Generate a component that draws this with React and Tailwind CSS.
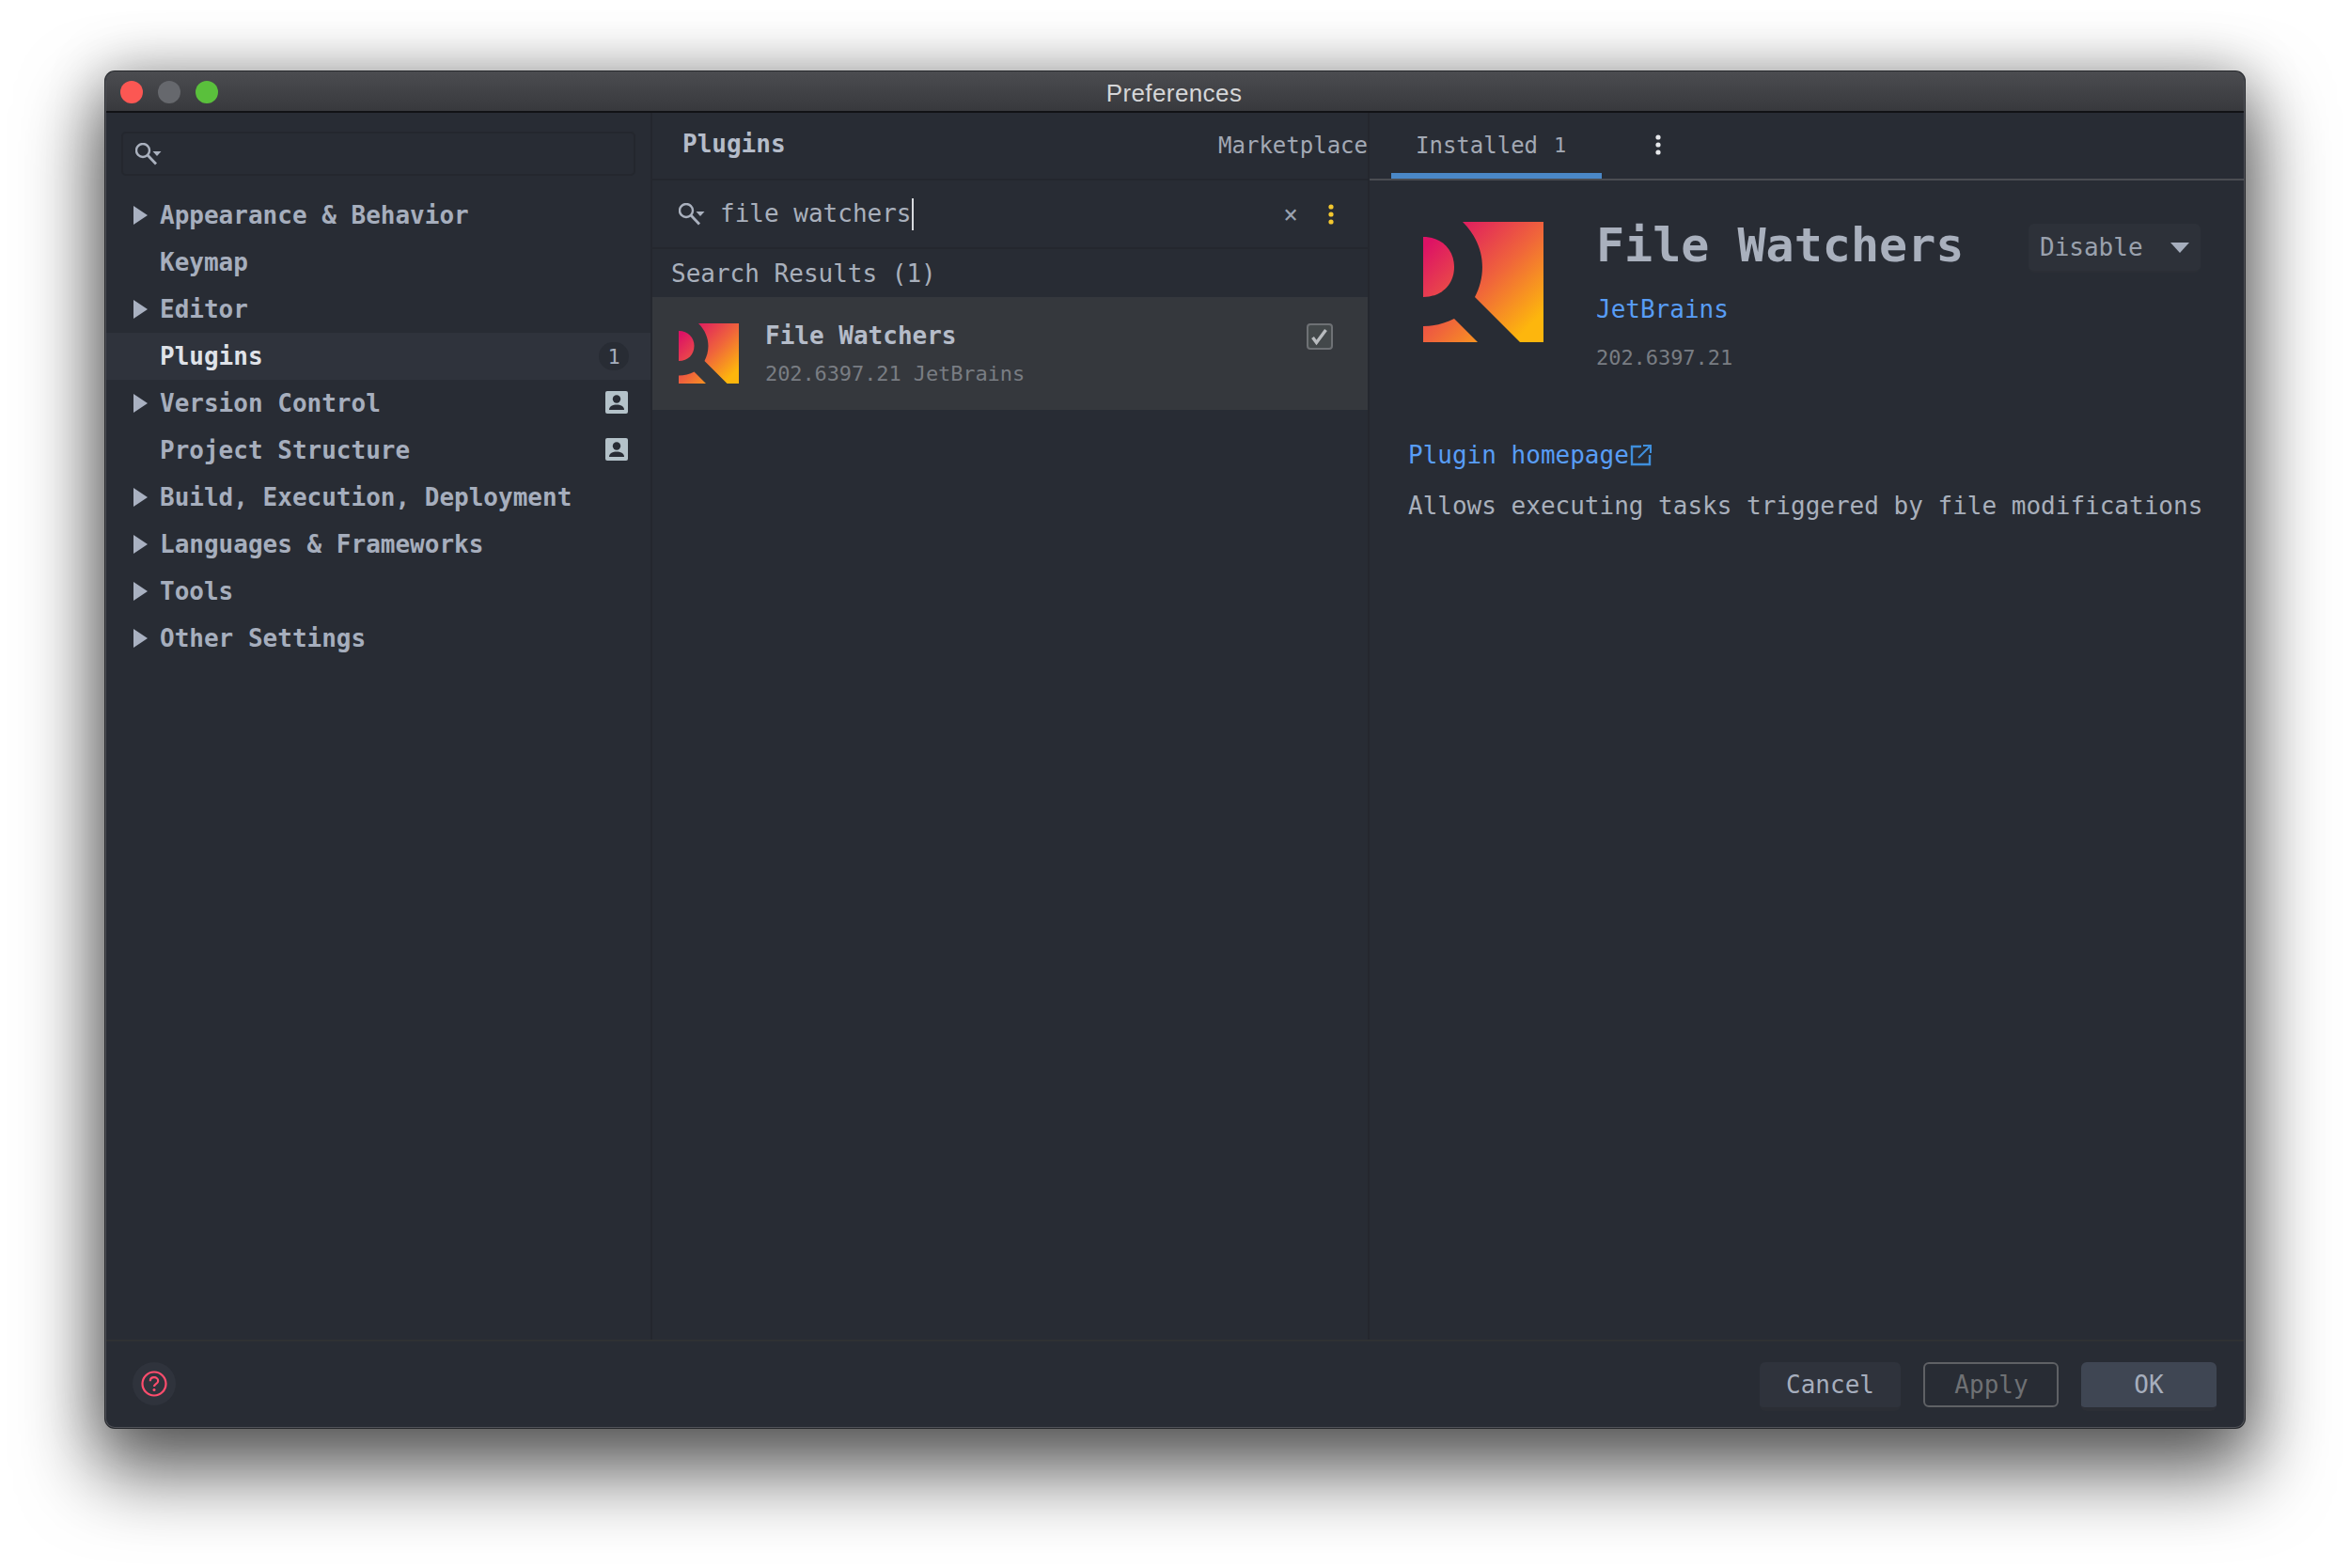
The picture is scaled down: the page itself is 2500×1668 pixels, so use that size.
const mono = "font-['DejaVu_Sans_Mono',monospace]";

const settings = [
  { label: "Appearance & Behavior", arrow: true },
  { label: "Keymap" },
  { label: "Editor", arrow: true },
  { label: "Plugins", active: true, badge: "1" },
  { label: "Version Control", arrow: true, person: true },
  { label: "Project Structure", person: true },
  { label: "Build, Execution, Deployment", arrow: true },
  { label: "Languages & Frameworks", arrow: true },
  { label: "Tools", arrow: true },
  { label: "Other Settings", arrow: true },
];

function SearchIcon() {
  return (
    <svg width="28" height="24" viewBox="0 0 28 24" fill="none" className="shrink-0">
      <circle cx="8" cy="8" r="7" stroke="#aab1be" strokeWidth="2.400" />
      <path d="M13 13l9 9.5" stroke="#aab1be" strokeWidth="2.800" />
      <path d="M18.5 9h9l-4.500 5z" fill="#aab1be" />
    </svg>
  );
}

function PersonIcon() {
  return (
    <svg width="24" height="24" viewBox="0 0 24 24">
      <rect width="24" height="24" rx="2" fill="#b4c2c9" />
      <circle cx="12" cy="8.500" r="4.200" fill="#282c34" />
      <path d="M4 20c0-4 4-5.500 8-5.500s8 1.500 8 5.500z" fill="#282c34" />
    </svg>
  );
}

function PluginLogo({ size, id }) {
  return (
    <svg width={size} height={size} viewBox="0 0 128 128" className="shrink-0">
      <defs>
        <linearGradient id={id} gradientUnits="userSpaceOnUse" x1="14" y1="14" x2="112" y2="112">
          <stop offset="0" stopColor="#dd1265" />
          <stop offset="0.55" stopColor="#f0663a" />
          <stop offset="1" stopColor="#fdb60d" />
        </linearGradient>
      </defs>
      <path d="M42 0H128V128H103L55 80C68 55 66 24 42 0Z" fill={`url(#${id})`} />
      <path d="M0 16C20 16 33 30 33 48C33 66 20 80 0 80Z" fill={`url(#${id})`} />
      <path d="M0 111C12 111 23 108 33 103L58 128H0Z" fill={`url(#${id})`} />
    </svg>
  );
}

function Dots({ color }) {
  return (
    <svg width="6" height="22" viewBox="0 0 6 22">
      <circle cx="3" cy="3" r="2.600" fill={color} />
      <circle cx="3" cy="11" r="2.600" fill={color} />
      <circle cx="3" cy="19" r="2.600" fill={color} />
    </svg>
  );
}

function Sidebar() {
  return (
    <aside className="w-[581px] shrink-0 border-r-2 border-[#24272e] flex flex-col">
      <div className="mt-[20px] ml-[16px] w-[547px] h-[47px] rounded-[5px] border-2 border-[#24272e] flex items-center pl-[13px]">
        <SearchIcon />
      </div>
      <div className="mt-[17px] flex flex-col">
        {settings.map((s) => (
          <div
            key={s.label}
            className={`h-[50px] flex items-center relative text-[26px] font-bold pl-[57px] pr-[20px] ${
              s.active ? "bg-[#2f333c] text-[#dfe2e8]" : "text-[#a6aebd]"
            }`}
          >
            {s.arrow && (
              <span className="absolute left-[29px] top-[15px] w-0 h-0 border-y-[10px] border-y-transparent border-l-[15px] border-l-[#a9b1c1]" />
            )}
            <span className="flex-1 leading-none">{s.label}</span>
            {s.badge && (
              <span className="w-[32px] h-[30px] mr-[3px] rounded-full bg-[#282c34] text-[#a6aebd] text-[22px] font-normal flex items-center justify-center">
                {s.badge}
              </span>
            )}
            {s.person && (
              <span className="mr-[4px] -mt-[2px] flex">
                <PersonIcon />
              </span>
            )}
          </div>
        ))}
      </div>
    </aside>
  );
}

function PluginList() {
  return (
    <section className="w-[763px] shrink-0 border-r-2 border-[#24272e] flex flex-col">
      <div className="h-[72px] border-b-2 border-[#24272e] flex items-center justify-between pl-[32px]">
        <span className="text-[26px] font-bold text-[#b5bcc9] -mt-[4px]">Plugins</span>
        <span className="text-[24px] text-[#a3a9b4]">Marketplace</span>
      </div>
      <div className="h-[73px] border-b-2 border-[#24272e] flex items-center pl-[28px]">
        <SearchIcon />
        <span className="ml-[16px] -mt-[1px] text-[26px] text-[#a9b0bc] leading-none">file watchers</span>
        <span className="w-[2px] h-[34px] bg-[#d8dade]" />
        <span className="ml-auto text-[#9aa2b0] text-[26px] leading-none">×</span>
        <span className="ml-[32px] mr-[36px] flex">
          <Dots color="#f4c82f" />
        </span>
      </div>
      <div className="h-[51px] flex items-center pl-[20px] pt-[1px] text-[26px] text-[#a9b0bc]">Search Results (1)</div>
      <div className="h-[120px] bg-[#35383d] flex pl-[28px] pr-[37px] pt-[28px]">
        <PluginLogo size={64} id="logo-small" />
        <div className="ml-[28px] flex-1">
          <div className="h-[26px] flex items-center text-[26px] font-bold text-[#b5bcc9]">File Watchers</div>
          <div className="mt-[15px] text-[22px] leading-[26px] tracking-[-0.1px] text-[#797d83]">202.6397.21 JetBrains</div>
        </div>
        <svg width="28" height="28" viewBox="0 0 28 28" fill="none" className="shrink-0">
          <rect x="1" y="1" width="26" height="26" rx="3" fill="#43484a" stroke="#6e7175" strokeWidth="2" />
          <path d="M6.500 15l4 5.500L20.500 7" stroke="#b8bbbe" strokeWidth="3.400" />
        </svg>
      </div>
    </section>
  );
}

function PluginDetails() {
  return (
    <section className="flex-1 flex flex-col min-w-0">
      <div className="h-[72px] border-b-2 border-[#4a4d52] flex items-stretch pl-[23px]">
        <div className="w-[224px] h-[70px] border-b-[6px] border-[#4a88c7] flex items-center pl-[26px] pt-[5px] text-[24px] text-[#a3a9b4]">
          Installed<span className="ml-[17px] text-[22px]">1</span>
        </div>
        <span className="ml-[57px] mt-[23px] flex self-start">
          <Dots color="#e6e8eb" />
        </span>
      </div>
      <div className="pl-[41px] flex flex-col">
        <div className="flex pl-[16px] pt-[44px]">
          <PluginLogo size={128} id="logo-big" />
          <div className="ml-[56px] flex-1">
            <div className="h-[52px] -mt-[1px] flex items-center text-[50px] font-bold text-[#a9b0bd] leading-none">File Watchers</div>
            <div className="mt-[27px] text-[26px] leading-[30px] text-[#589df6]">JetBrains</div>
            <div className="mt-[24px] text-[22px] leading-[26px] tracking-[-0.05px] text-[#797d83]">202.6397.21</div>
          </div>
          <div className="mt-[2px] mr-[46px] w-[183px] h-[52px] rounded-[6px] bg-[#2d3139] border-b-2 border-[#2b2e35] flex items-center pl-[12px] text-[26px] text-[#9aa1ad]">
            Disable
            <span className="ml-[29px] w-0 h-0 border-x-[10px] border-x-transparent border-t-[11px] border-t-[#a6aebd]" />
          </div>
        </div>
        <div className="mt-[74px] flex items-center h-[32px] text-[26px] text-[#589df6]">
          Plugin homepage
          <svg width="24" height="24" viewBox="0 0 24 24" fill="none" className="ml-[1px]">
            <path d="M12 3H2v19h19V12" stroke="#3f8fdc" strokeWidth="2.400" />
            <path d="M9 15L21 3M14 2h8v8" stroke="#3f8fdc" strokeWidth="2" />
          </svg>
        </div>
        <div className="mt-[22px] h-[32px] flex items-center text-[26px] text-[#a9b0bc] whitespace-nowrap">
          Allows executing tasks triggered by file modifications
        </div>
      </div>
    </section>
  );
}

function Footer() {
  return (
    <footer className="h-[93px] shrink-0 border-t-2 border-[#2f3133] flex items-start pt-[22px] pl-[28px] pr-[29px]">
      <div className="w-[46px] h-[46px] rounded-full bg-[#2f333c] flex items-center justify-center">
        <svg width="28" height="28" viewBox="0 0 28 28" fill="none">
          <circle cx="14" cy="14" r="12.500" stroke="#ff4d6d" strokeWidth="2.200" />
          <path d="M9.800 11.200c0-2.600 1.900-4 4.200-4s4.200 1.500 4.200 3.700c0 3.200-4.200 3.200-4.200 6" stroke="#ff4d6d" strokeWidth="2.200" />
          <circle cx="14" cy="20.500" r="1.500" fill="#ff4d6d" />
        </svg>
      </div>
      <div className="ml-auto flex gap-[24px] text-[26px]">
        <div className="w-[150px] h-[52px] rounded-[6px] bg-[#2f333c] border-b-[4px] border-[#2b2e35] flex items-center justify-center text-[#a6aebd]">
          Cancel
        </div>
        <div className="w-[144px] h-[48px] rounded-[6px] border-2 border-[#5f6165] flex items-center justify-center pl-[1px] text-[#6f7174]">
          Apply
        </div>
        <div className="w-[144px] h-[52px] rounded-[6px] bg-[#3f4653] border-b-[4px] border-[#2c2f36] flex items-center justify-center text-[#a6aebd]">
          OK
        </div>
      </div>
    </footer>
  );
}

export default function App() {
  return (
    <div className={`w-[2500px] h-[1668px] overflow-hidden bg-white pt-[76px] pl-[112px] ${mono}`}>
      <div className="w-[2276px] h-[1443px] rounded-[10px] bg-[#282c34] flex flex-col overflow-hidden border-x border-b border-[#515359] shadow-[0_0_0_1px_#26282c,0_40px_80px_10px_rgba(0,0,0,0.6),0_0_60px_rgba(0,0,0,0.25)]">
        <header className="h-[44px] shrink-0 relative flex items-center justify-center border-b-2 border-[#111215] bg-gradient-to-b from-[#4b4c50] to-[#38393d]">
          <div className="absolute left-[15px] top-[10px] flex gap-[16px]">
            <span className="w-[24px] h-[24px] rounded-full bg-[#fc5753]" />
            <span className="w-[24px] h-[24px] rounded-full bg-[#66686d]" />
            <span className="w-[24px] h-[24px] rounded-full bg-[#5ac03c]" />
          </div>
          <span className="font-['Liberation_Sans',sans-serif] text-[26px] tracking-[0.4px] pt-[4px] -ml-[2px] text-[#d5d6d8]">Preferences</span>
        </header>
        <div className="flex-1 flex min-h-0">
          <Sidebar />
          <PluginList />
          <PluginDetails />
        </div>
        <Footer />
      </div>
    </div>
  );
}
